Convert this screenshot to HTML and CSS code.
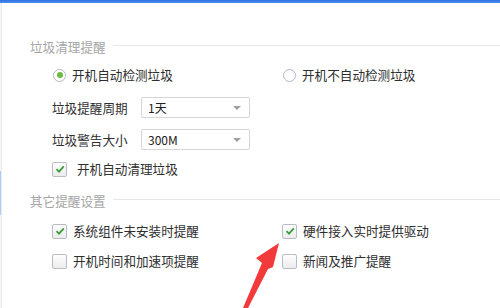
FILE: index.html
```html
<!DOCTYPE html>
<html lang="zh-CN">
<head>
    <meta charset="UTF-8">
    <title>提醒设置</title>
    <link rel="stylesheet" href="styles.css">
</head>
<body>
    <div class="top-bar"></div>

    <div class="page">
        <!-- Side strip with the active marker -->
        <div class="side">
            <div class="side-active"></div>
        </div>

        <div class="content">
            <!-- 垃圾清理提醒 -->
            <div class="section-title">
                <span>垃圾清理提醒</span>
                <div class="rule"></div>
            </div>

            <div class="row row-radio">
                <label class="opt">
                    <span class="radio checked"></span>
                    <span>开机自动检测垃圾</span>
                </label>
                <label class="opt">
                    <span class="radio"></span>
                    <span>开机不自动检测垃圾</span>
                </label>
            </div>

            <div class="row row-select first">
                <span class="field-label">垃圾提醒周期</span>
                <div class="select">
                    <span>1天</span>
                    <span class="caret"></span>
                </div>
            </div>

            <div class="row row-select">
                <span class="field-label">垃圾警告大小</span>
                <div class="select">
                    <span>300M</span>
                    <span class="caret"></span>
                </div>
            </div>

            <div class="row row-check">
                <label class="opt wide">
                    <span class="checkbox checked">
                        <svg viewBox="0 0 12 12" width="12" height="12"><path d="M2.5 6.2 L5 8.6 L9.8 3.4" fill="none" stroke="#3a9d3a" stroke-width="1.8"/></svg>
                    </span>
                    <span>开机自动清理垃圾</span>
                </label>
            </div>

            <!-- 其它提醒设置 -->
            <div class="section-title second">
                <span>其它提醒设置</span>
                <div class="rule"></div>
            </div>

            <div class="row row-opts">
                <label class="opt">
                    <span class="checkbox checked">
                        <svg viewBox="0 0 12 12" width="12" height="12"><path d="M2.5 6.2 L5 8.6 L9.8 3.4" fill="none" stroke="#3a9d3a" stroke-width="1.8"/></svg>
                    </span>
                    <span>系统组件未安装时提醒</span>
                </label>
                <label class="opt">
                    <span class="checkbox checked">
                        <svg viewBox="0 0 12 12" width="12" height="12"><path d="M2.5 6.2 L5 8.6 L9.8 3.4" fill="none" stroke="#3a9d3a" stroke-width="1.8"/></svg>
                    </span>
                    <span>硬件接入实时提供驱动</span>
                </label>
            </div>

            <div class="row row-opts">
                <label class="opt">
                    <span class="checkbox"></span>
                    <span>开机时间和加速项提醒</span>
                </label>
                <label class="opt">
                    <span class="checkbox"></span>
                    <span>新闻及推广提醒</span>
                </label>
            </div>
        </div>
    </div>

    <!-- Red annotation arrow -->
    <svg class="arrow" width="60" height="72" viewBox="240 240 60 72">
        <polygon points="279,243 256,258 262,263 243,308 248,308 268,269 273,267" fill="#f33a3a"/>
    </svg>
</body>
</html>
```

FILE: styles.css
```css
/* Base */
body {
    margin: 0;
    font-family: "Noto Sans CJK SC", "Noto Sans", sans-serif;
    font-size: 12.6px;
    color: #2e2e2e;
    background: #fff;
    width: 500px;
    height: 308px;
    overflow: hidden;
    position: relative;
}

.top-bar {
    height: 3px;
    background: linear-gradient(#2f74e0, #4a8cf0);
}

.page {
    display: flex;
    height: 305px;
}

/* Left strip */
.side {
    width: 5px;
    background: #f5f5f5;
    border-right: 1px solid #ececec;
}

.side-active {
    margin-top: 168px;
    height: 42px;
    background: #72a9f6;
    border: 1px solid #a9ccfa;
    border-left: none;
}

.content {
    flex: 1;
    padding: 34px 0 0 28px;
}

/* Section headers */
.section-title {
    display: flex;
    align-items: center;
    height: 20px;
    line-height: 20px;
    color: #a5a5a5;
}

.section-title .rule {
    flex: 1;
    height: 1px;
    background: #e6e6e6;
    margin-left: 7px;
    margin-top: -4px;
}

.section-title.second {
    margin-top: 12px;
}

/* Rows */
.row {
    display: flex;
    align-items: center;
    padding-left: 22px;
    line-height: 20px;
}

.row-radio {
    height: 20px;
    margin-top: 8px;
}

.row-select {
    height: 21px;
    margin-top: 11px;
}

.row-select.first {
    margin-top: 12px;
}

.row-check {
    height: 20px;
    margin-top: 9px;
}

.row-opts {
    height: 20px;
    margin-top: 10px;
}

.opt {
    display: flex;
    align-items: center;
    width: 230px;
}

.opt.wide {
    width: auto;
}

/* Radio */
.radio {
    width: 11px;
    height: 11px;
    border: 1px solid #b4b9c0;
    border-radius: 50%;
    margin: 0 6px 0 1px;
    display: flex;
    align-items: center;
    justify-content: center;
    background: #fff;
}

.radio.checked::after {
    content: "";
    width: 6px;
    height: 6px;
    border-radius: 50%;
    background: #6bbc3f;
}

/* Checkbox */
.checkbox {
    width: 13px;
    height: 13px;
    border: 1px solid #b9bcc1;
    border-radius: 2px;
    background: linear-gradient(#fdfdfd, #ececec);
    margin-right: 6px;
    display: flex;
    align-items: center;
    justify-content: center;
}

.row-check .checkbox {
    margin-right: 10px;
}

/* Select fields */
.field-label {
    width: 89px;
}

.select {
    height: 19px;
    border: 1px solid #d6d6d6;
    border-radius: 2px;
    display: flex;
    align-items: center;
    justify-content: space-between;
    padding: 0 8px 0 6px;
    width: 93px;
    font-size: 12px;
    color: #222;
}

.caret {
    width: 0;
    height: 0;
    border-left: 4px solid transparent;
    border-right: 4px solid transparent;
    border-top: 4px solid #a0a0a0;
}

/* Annotation */
.arrow {
    position: absolute;
    left: 240px;
    top: 240px;
}
```
